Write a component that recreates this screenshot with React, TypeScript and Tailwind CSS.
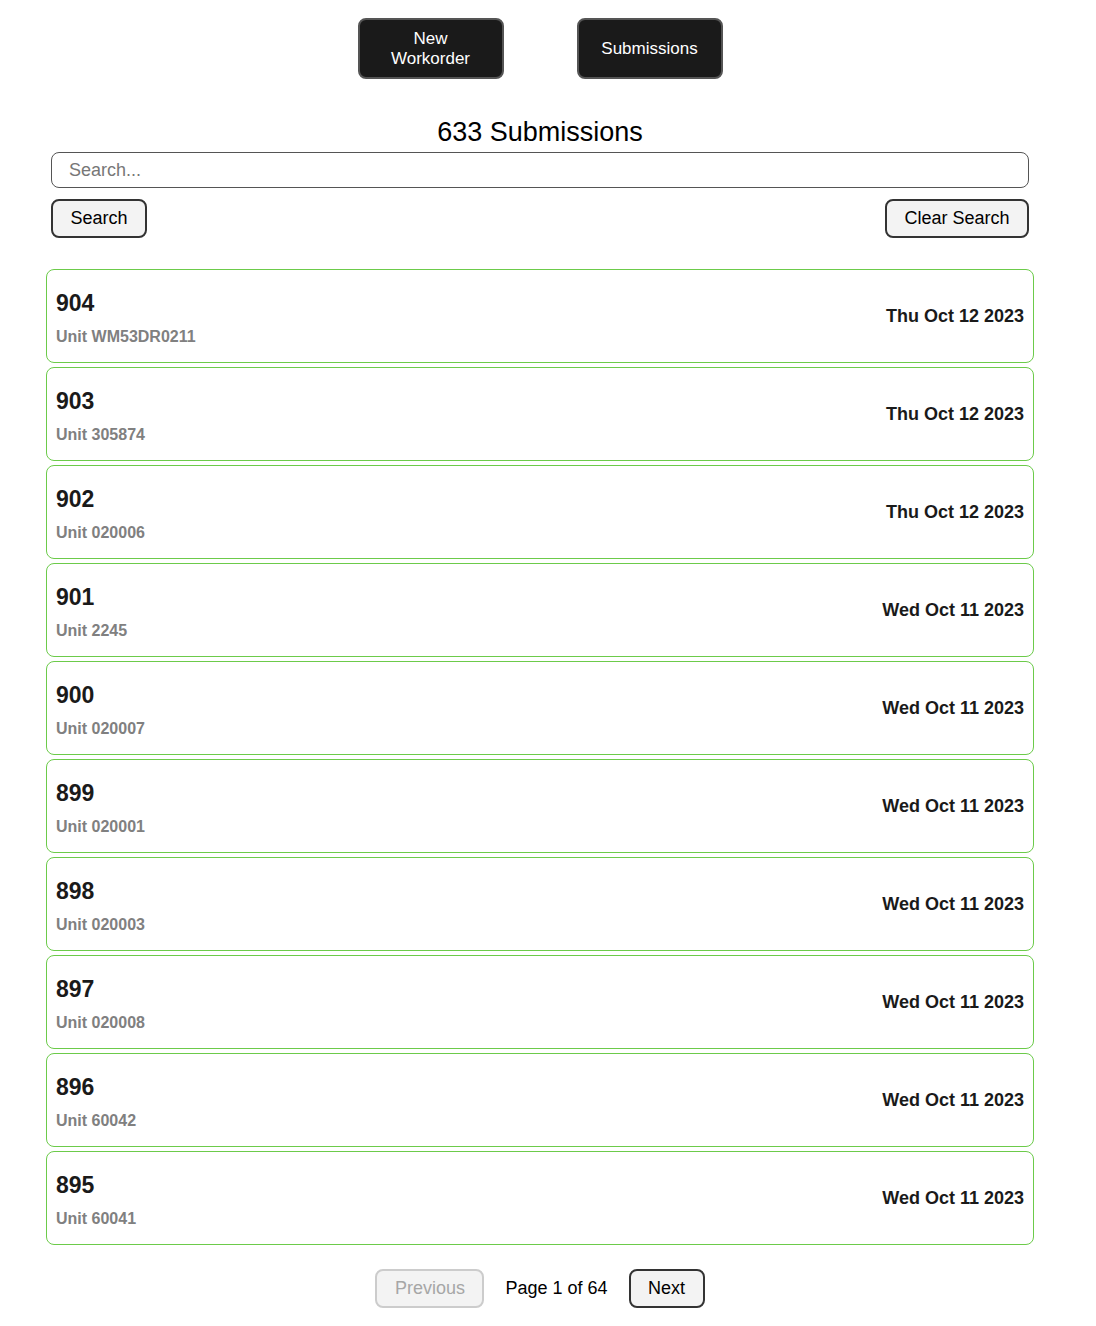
import { useState } from 'react';

type Submission = {
  id: number;
  unit: string;
  date: string;
};

const submissions: Submission[] = [
  { id: 904, unit: 'WM53DR0211', date: 'Thu Oct 12 2023' },
  { id: 903, unit: '305874', date: 'Thu Oct 12 2023' },
  { id: 902, unit: '020006', date: 'Thu Oct 12 2023' },
  { id: 901, unit: '2245', date: 'Wed Oct 11 2023' },
  { id: 900, unit: '020007', date: 'Wed Oct 11 2023' },
  { id: 899, unit: '020001', date: 'Wed Oct 11 2023' },
  { id: 898, unit: '020003', date: 'Wed Oct 11 2023' },
  { id: 897, unit: '020008', date: 'Wed Oct 11 2023' },
  { id: 896, unit: '60042', date: 'Wed Oct 11 2023' },
  { id: 895, unit: '60041', date: 'Wed Oct 11 2023' },
];

function SubmissionCard({ item }: { item: Submission }) {
  return (
    <div className="h-[94px] border border-[#6ccb4a] rounded-[8px] bg-white pl-[9px] pr-[9px] flex items-center justify-between">
      <div className="flex flex-col mt-[4px]">
        <span className="text-[23px] leading-[26px] font-bold text-[#1a1a1a]">{item.id}</span>
        <span className="mt-[11px] text-[16px] leading-[20px] font-bold text-[#808080]">Unit {item.unit}</span>
      </div>
      <span className="text-[18px] leading-[20px] font-bold text-[#1a1a1a]">{item.date}</span>
    </div>
  );
}

export default function App() {
  const [query, setQuery] = useState('');

  return (
    <div className="min-h-screen bg-white font-['Liberation_Sans',Arial,sans-serif]">
      <div className="w-[1080px]">
        <div className="pt-[18px] flex justify-center gap-[73px]">
          <button className="w-[146px] h-[61px] bg-[#1a1a1a] text-white text-[17px] leading-[20px] rounded-[8px] border-2 border-[#555]">
            New
            <br />
            Workorder
          </button>
          <button className="w-[146px] h-[61px] bg-[#1a1a1a] text-white text-[17px] leading-[20px] rounded-[8px] border-2 border-[#555]">
            Submissions
          </button>
        </div>

        <h1 className="mt-[38px] text-center text-[27px] leading-[30px] text-black">633 Submissions</h1>

        <div className="mt-[5px] px-[51px]">
          <input
            type="text"
            value={query}
            onChange={(e) => setQuery(e.target.value)}
            placeholder="Search..."
            className="w-full h-[36px] rounded-[8px] border border-[#555] px-[17px] text-[18px] text-black placeholder:text-[#777] outline-none"
          />
          <div className="mt-[11px] flex justify-between">
            <button className="w-[96px] h-[39px] rounded-[8px] border-2 border-[#333] bg-[#f3f3f3] text-[18px] text-black">
              Search
            </button>
            <button className="w-[144px] h-[39px] rounded-[8px] border-2 border-[#333] bg-[#f3f3f3] text-[18px] text-black">
              Clear Search
            </button>
          </div>
        </div>

        <div className="mt-[31px] px-[46px] flex flex-col gap-[4px]">
          {submissions.map((s) => (
            <SubmissionCard key={s.id} item={s} />
          ))}
        </div>

        <div className="mt-[24px] pb-[18px] flex items-center justify-center">
          <button
            disabled
            className="w-[109px] h-[39px] rounded-[8px] border-2 border-[#ccc] bg-[#f3f3f3] text-[18px] text-[#a6a6a6]"
          >
            Previous
          </button>
          <span className="mx-[21px] text-[18px] text-black">Page 1 of 64</span>
          <button className="w-[76px] h-[39px] rounded-[8px] border-2 border-[#333] bg-[#f3f3f3] text-[18px] text-black">
            Next
          </button>
        </div>
      </div>
    </div>
  );
}
